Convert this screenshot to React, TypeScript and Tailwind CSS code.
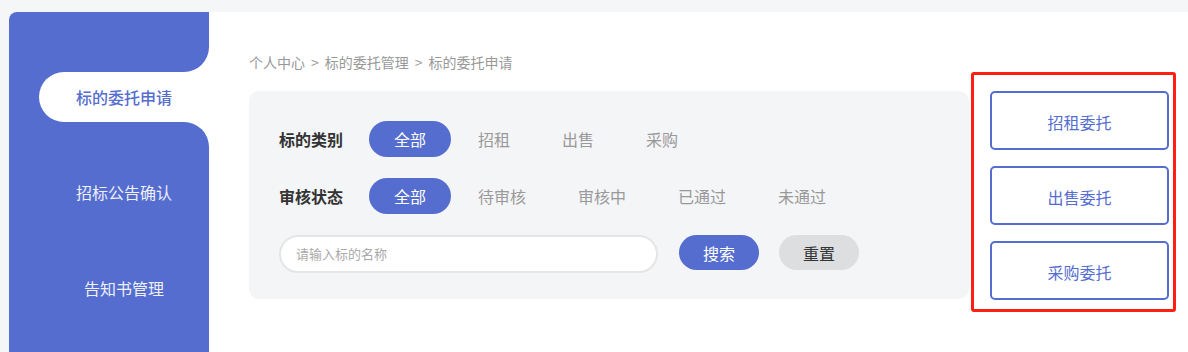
const font = { fontFamily: '"Noto Sans CJK SC", "Noto Sans", sans-serif' };

const types = ["全部", "招租", "出售", "采购"];
const statuses = ["全部", "待审核", "审核中", "已通过", "未通过"];
const crumbs = ["个人中心", "标的委托管理", "标的委托申请"];

function FilterRow({ label, options }: { label: string; options: string[] }) {
  return (
    <div className="flex items-center">
      <span className="w-[90px] text-[16px] font-bold text-[#333]">{label}</span>
      <div className="flex gap-[2px]">
        {options.map((o, i) => (
          <span
            key={o}
            className={
              i === 0
                ? "h-[36px] px-[25px] rounded-full bg-[#546dcf] text-white text-[16px] flex items-center"
                : "h-[36px] px-[25px] rounded-full text-[#999] text-[16px] flex items-center"
            }
          >
            {o}
          </span>
        ))}
      </div>
    </div>
  );
}

export default function App() {
  return (
    <div className="h-[352px] bg-[#f5f6f7] pt-[12px] pl-[9px] flex overflow-hidden" style={font}>
      {/* sidebar */}
      <div className="w-[200px] bg-white rounded-tl-[8px] overflow-hidden flex flex-col">
        <div className="h-[60px] bg-[#546dcf] rounded-br-[25px]" />
        <div className="bg-[#546dcf]">
          <div className="ml-[30px] h-[50px] bg-white rounded-l-full flex items-center justify-center text-[16px] font-medium text-[#546dcf]">
            标的委托申请
          </div>
        </div>
        <div className="flex-1 bg-[#546dcf] rounded-tr-[25px] pt-[22px] pl-[30px]">
          <div className="h-[96px] flex items-center justify-center text-[16px] text-[#eef0fa]">
            招标公告确认
          </div>
          <div className="h-[96px] flex items-center justify-center text-[16px] text-[#eef0fa]">
            告知书管理
          </div>
        </div>
      </div>

      {/* content */}
      <div className="flex-1 bg-white flex items-start pl-[40px]">
        <div className="w-[720px] pt-[40px]">
          <div className="h-[20px] leading-[20px] text-[14px] text-[#999] flex">
            {crumbs.map((c, i) => (
              <span key={c} className="flex">
                {i > 0 && <span className="mx-[6px]">&gt;</span>}
                {c}
              </span>
            ))}
          </div>
          <div className="mt-[19px] h-[208px] bg-[#f4f5f7] rounded-[10px] pt-[30px] px-[30px] flex flex-col gap-[21px]">
            <FilterRow label="标的类别" options={types} />
            <FilterRow label="审核状态" options={statuses} />
            <div className="flex items-start">
              <div className="w-[379px] h-[38px] rounded-full bg-white border-2 border-[#e4e5e7] flex items-center pl-[15px] text-[13px] text-[#aaa]">
                请输入标的名称
              </div>
              <button className="ml-[21px] w-[80px] h-[35px] rounded-full bg-[#546dcf] text-white text-[16px]">
                搜索
              </button>
              <button className="ml-[20px] w-[80px] h-[35px] rounded-full bg-[#dcdee0] text-[#333] text-[16px]">
                重置
              </button>
            </div>
          </div>
        </div>

        <div className="mt-[60px] ml-[2px] w-[205px] h-[240px] border-[3px] border-[#ff1f14] rounded-[3px] pt-[16px] pl-[16px] flex flex-col gap-[16px]">
          {["招租委托", "出售委托", "采购委托"].map((t) => (
            <div
              key={t}
              className="w-[179px] h-[59px] border-2 border-[#546dcf] rounded-[5px] flex items-center justify-center pt-[2px] text-[16px] text-[#546dcf]"
            >
              {t}
            </div>
          ))}
        </div>
      </div>
    </div>
  );
}
